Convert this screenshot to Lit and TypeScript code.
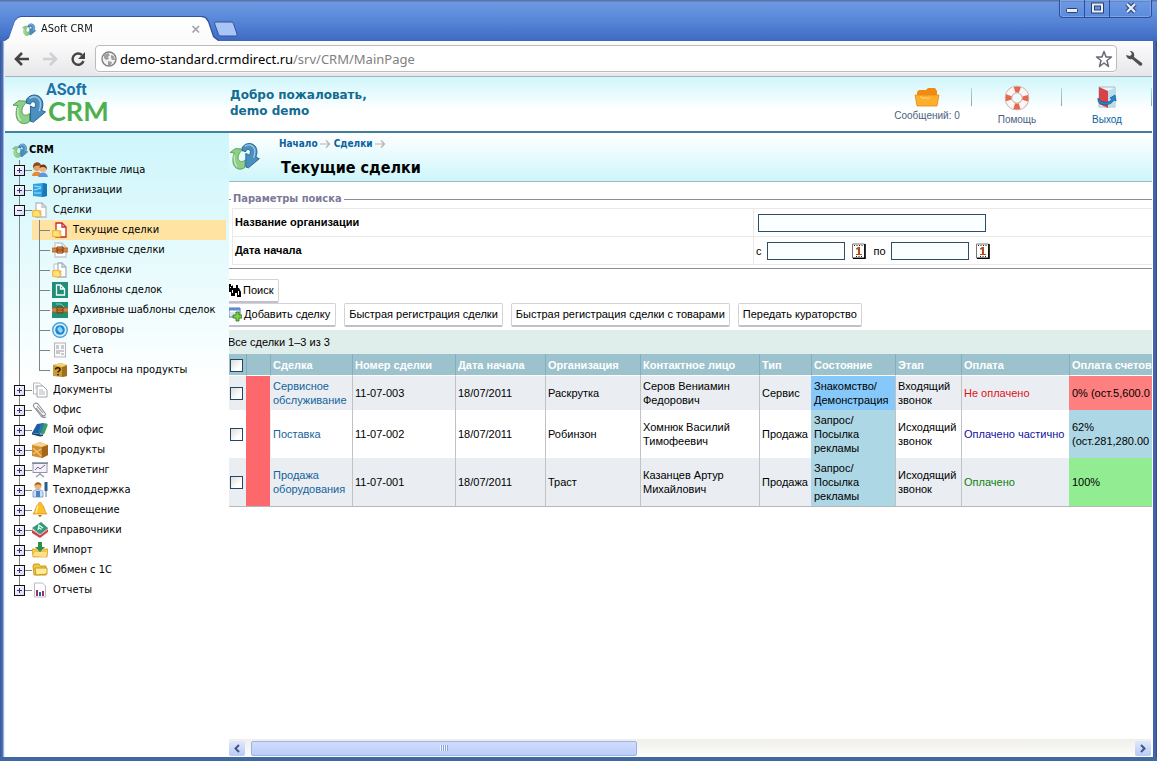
import { LitElement, html, css, svg, TemplateResult, SVGTemplateResult } from "lit";
import { customElement, state } from "lit/decorators.js";
import { classMap } from "lit/directives/class-map.js";

const arrows = svg`
  <path d="M1 12 L7 7.500 L15 8 L13.500 10.500 C11 13 9.500 17 10.500 20 C12 23 16 23 18 20.500 L18 29 C13 33 6 31 4.500 24 C3.800 20 4.500 15 6 12.500 Z" fill="#8fce86" stroke="#4f9f55" stroke-width="1"/>
  <path d="M6 15 C5.500 20 6 25 9 28" fill="none" stroke="#c6ebbb" stroke-width="1.500"/>
  <path d="M15 6 C19 0 28 0 31 7 C32.500 11 31.500 15 30.500 17.500 L34.500 19 L22 29.500 L19 28.500 L19 13 L23 15 C25 12 24.500 8.500 21.500 8.500 C20 8.500 19.500 9.500 19 11 L15 10 Z" fill="#4a8fbe" stroke="#1f5f92" stroke-width="1"/>
  <path d="M18 5 C22 2 27 3 29 8 C30 12 29 15 28 18" fill="none" stroke="#9cc9e6" stroke-width="1.500"/>`;

const page = (stroke: string, x = 4) => svg`
  <path d="M${x} 1h${10 - x}l4 4v10h-${14 - x}z" fill="#fff" stroke="${stroke}" stroke-width="1.300"/>
  <path d="M10 1v4h4" fill="none" stroke="${stroke}" stroke-width="1.300"/>`;

const hand = svg`<path d="M0 9l4-1 5 1v1H7l2 1v2l-1 2H4l-4-1z" fill="#ffd75e" stroke="#e0a92e" stroke-width=".8"/><path d="M2 11h5M2 13h5" stroke="#fff0a8" stroke-width=".8"/>`;
const belt = svg`<path d="M0 6h16v4H0z" fill="#d9813f"/><path d="M0 6h16M0 10h16" stroke="#a85a20" stroke-width=".8"/><path d="M5 5h6v6H5z" fill="none" stroke="#7b3d10" stroke-width="1"/><path d="M5 8h6" stroke="#7b3d10"/>`;

const ICONS: Record<string, SVGTemplateResult> = {
  people: svg`<circle cx="5" cy="5" r="4" fill="#e2a265"/><path d="M1 5c0-6 8-6 8-1C6 3 3 3 1 6z" fill="#8a4a1c"/><path d="M0 14c0-5 9-6 10 0z" fill="#e58a2e"/><circle cx="11" cy="6.500" r="3.600" fill="#edb27c"/><path d="M7.500 6c0-5 8-5 7.500 2-1-3-4-4-7.500-2z" fill="#6f3916"/><path d="M6 15c1-6 9-6 10 0z" fill="#5f95dc"/>`,
  cube: svg`<path d="M1 2l10-1 4 1v12l-5 1-9-1z" fill="#2f9fe0"/><path d="M11 1l4 1v12l-5 1z" fill="#1678b8"/><path d="M2 4l7 1M2 8l7-2M2 11l7 0" stroke="#a8e2fb" stroke-width="1.200"/>`,
  deal: svg`${page("#b9bcc2")}${hand}`,
  dealRed: svg`${page("#c9252c")}${hand}`,
  dealArch: svg`${page("#c6c9cd", 3)}${belt}`,
  dealAll: svg`<path d="M2 2h7v12H2z" fill="#fff" stroke="#b8bfcc"/>${page("#a8b2c4", 6)}${hand}`,
  template: svg`<rect width="16" height="16" fill="#1f8f76"/><path d="M4.500 3h4l4 4v6h-8z M8.500 3v4h4" fill="none" stroke="#fff" stroke-width="1.300"/>`,
  templateArch: svg`<rect width="16" height="16" fill="#1f8f76"/><path d="M4 2h5l3 3" fill="none" stroke="#7ad0b4"/>${belt}`,
  contract: svg`<circle cx="8" cy="8" r="7.300" fill="#d5efff" stroke="#4aa0d8" stroke-width="1.400"/><circle cx="8" cy="8" r="4.800" fill="#1f87d0"/><path d="M5 7l2.500-2.500 2 1.500 1.500 2.500-2 2.500-2-1z" fill="#8fd6fb"/>`,
  invoice: svg`<rect x="2.500" y="1" width="11" height="14" fill="#fafafa" stroke="#b4b4b8"/><path d="M4 4h3M9 4h3M4 6h3M9 6h3M4 9h8M4 11h4M9 12h3" stroke="#9a9aa2"/>`,
  question: svg`<path d="M1 3l8-2 6 2v11l-5 1-9-1z" fill="#c99a35"/><path d="M10 5l5-2v11l-5 1z" fill="#a1701a"/><path d="M1 3l8-2 6 2-5 2z" fill="#f3d374"/><path d="M3.500 7.500c0-2.500 4.500-2.500 4.500 0 0 1.500-2 1.500-2 3M6 12v1.500" fill="none" stroke="#2a1a05" stroke-width="1.500"/>`,
  docs: svg`<path d="M1.500 1h6l3 3v8h-9z" fill="#fff" stroke="#b3b7bd"/><path d="M5 4h6l4 4v7H5z" fill="#fff" stroke="#a0a5ac"/><path d="M7 8h4M7 10h6M7 12h6M3 4h3M3 6h1" stroke="#b3b7bd"/>`,
  clip: svg`<path d="M4 6l6 7c2 2 4 0 3-2L6 2C4-0 0 2 2 5l7 9c1 1 3 2 5 1M5 4l6 7" fill="none" stroke="#8e9095" stroke-width="1.100"/>`,
  notebook: svg`<path d="M5 2l7-1-4 11-8-1z" fill="#1b5f9e"/><path d="M9 1.500l6 0-4 10-5 0z" fill="#2a76b8"/><path d="M12 1.500l4 1-4 10-3-1z" fill="#39a060"/><path d="M0 11l9 1.500 2 0v1.500l-3 .5-8-2z" fill="#123f66"/>`,
  box: svg`<path d="M0 3l8-3 8 3v10l-6 3-10-2z" fill="#d08f35"/><path d="M0 3l8-3 8 3-6 2z" fill="#f6d48a"/><path d="M10 5l6-2v10l-6 3z" fill="#a5651a"/><path d="M1 6l8 8M9 7l-8 5" stroke="#f3c778" stroke-width="1.200"/>`,
  chart: svg`<rect x="1" y="1.500" width="14" height="9" fill="#f2f3f8" stroke="#9298a8"/><path d="M0 1h16" stroke="#7c8294" stroke-width="1.400"/><path d="M3 8l3-3 2 2 5-4" fill="none" stroke="#8b5a9a"/><path d="M8 10v2l-4 3M8 12l4 3" fill="none" stroke="#9298a8" stroke-width="1.300"/>`,
  support: svg`<circle cx="6" cy="4" r="3.400" fill="#efb37a"/><path d="M2.500 4c0-5 7-5 7 0-2-2-5-2-7 0z" fill="#a8601d"/><path d="M1 15V10c0-3 10-3 10 0v5z" fill="#cfe0f6" stroke="#6d93c9" stroke-width=".8"/><path d="M4 9v6h4V9" fill="#4d83c9"/><path d="M14 0v9" stroke="#2a5d8c" stroke-width="3"/><path d="M14 9v6" stroke="#8ba3bb" stroke-width="1.400"/>`,
  bell: svg`<path d="M8 0c1 0 1.500 1 1.500 2C13 4 12 9 15 12H1C4 9 3 4 6.500 2 6.500 1 7 0 8 0z" fill="#fbbf2d" stroke="#d08f12" stroke-width=".7"/><path d="M6 4c-1.500 2-1 5-2 7" stroke="#fff1a0" stroke-width="1.400" fill="none"/><path d="M6 13h4l-2 2.500z" fill="#b5720c"/>`,
  books: svg`<path d="M0 7v4l8 5 8-6V6l-8 6z" fill="#c8434a"/><path d="M0 6l9-6 7 6-8 6z" fill="#2f9b7a"/><path d="M0 7.500l8 5.500 8-6" fill="none" stroke="#f1e6e6" stroke-width=".8"/><path d="M6 8l1-5 4 3M6.500 5.500l3 2" fill="none" stroke="#e8fff4" stroke-width="1.200"/>`,
  importBox: svg`<path d="M0 7h4l1 2h6l1-2h4l-1 8H1z" fill="#f6c63e" stroke="#d29a1a" stroke-width=".7"/><path d="M1 14l2-4h12l-1 5z" fill="#ffe08a"/><path d="M6 0h4v5h3l-5 5-5-5h3z" fill="#2c8f45"/>`,
  folder: svg`<path d="M1 4l1-2h5l1 2h6v9l-12 0z" fill="#f3c93f" stroke="#c19415" stroke-width=".9"/><path d="M3 6h12l0 6-11 1z" fill="#ffeb9a" stroke="#c19415" stroke-width=".9"/>`,
  report: svg`<path d="M2.500 1h8l3 3v11h-11z" fill="#fff" stroke="#b9bcc2"/><path d="M5 8v6M11 9v5" stroke-width="2" stroke="#9b2f6c"/><path d="M8 10v4" stroke-width="2" stroke="#2d5b9f"/>`,
};

const icon = (name: string) => html`<svg class="ico" width="16" height="16" viewBox="0 0 16 16" aria-hidden="true">${ICONS[name]}</svg>`;
const logo = (w: number, h: number) => html`<svg class="ico" width="${w}" height="${h}" viewBox="0 0 35 32" aria-hidden="true">${arrows}</svg>`;

interface Node { label: string; icon: string; children?: Node[]; }

const TREE: Node[] = [
  { label: "Контактные лица", icon: "people" },
  { label: "Организации", icon: "cube" },
  {
    label: "Сделки", icon: "deal", children: [
      { label: "Текущие сделки", icon: "dealRed" },
      { label: "Архивные сделки", icon: "dealArch" },
      { label: "Все сделки", icon: "dealAll" },
      { label: "Шаблоны сделок", icon: "template" },
      { label: "Архивные шаблоны сделок", icon: "templateArch" },
      { label: "Договоры", icon: "contract" },
      { label: "Счета", icon: "invoice" },
      { label: "Запросы на продукты", icon: "question" },
    ],
  },
  { label: "Документы", icon: "docs" },
  { label: "Офис", icon: "clip" },
  { label: "Мой офис", icon: "notebook" },
  { label: "Продукты", icon: "box" },
  { label: "Маркетинг", icon: "chart" },
  { label: "Техподдержка", icon: "support" },
  { label: "Оповещение", icon: "bell" },
  { label: "Справочники", icon: "books" },
  { label: "Импорт", icon: "importBox" },
  { label: "Обмен с 1С", icon: "folder" },
  { label: "Отчеты", icon: "report" },
];

interface Deal {
  name: string; num: string; date: string; org: string; person: string; type: string;
  state: string[]; stateTone: string; stage: string; pay: string; payTone: string; bill: string[]; billTone: string;
}

const DEALS: Deal[] = [
  { name: "Сервисное обслуживание", num: "11-07-003", date: "18/07/2011", org: "Раскрутка", person: "Серов Вениамин Федорович", type: "Сервис", state: ["Знакомство/", "Демонстрация"], stateTone: "sky", stage: "Входящий звонок", pay: "Не оплачено", payTone: "unpaid", bill: ["0% (ост.5,600.0"], billTone: "red" },
  { name: "Поставка", num: "11-07-002", date: "18/07/2011", org: "Робинзон", person: "Хомнюк Василий Тимофеевич", type: "Продажа", state: ["Запрос/", "Посылка", "рекламы"], stateTone: "pale", stage: "Исходящий звонок", pay: "Оплачено частично", payTone: "partial", bill: ["62%", "(ост.281,280.00"], billTone: "pale" },
  { name: "Продажа оборудования", num: "11-07-001", date: "18/07/2011", org: "Траст", person: "Казанцев Артур Михайлович", type: "Продажа", state: ["Запрос/", "Посылка", "рекламы"], stateTone: "pale", stage: "Исходящий звонок", pay: "Оплачено", payTone: "paid", bill: ["100%"], billTone: "green" },
];

const COLUMNS = ["Сделка", "Номер сделки", "Дата начала", "Организация", "Контактное лицо", "Тип", "Состояние", "Этап", "Оплата", "Оплата счетов"];

const reset = css`
  :host, * { box-sizing: border-box; }
  button { font: inherit; color: inherit; margin: 0; padding: 0; border: 0; background: none; cursor: pointer; }
  input { font: inherit; margin: 0; }
  a { color: inherit; text-decoration: none; }
  ul { list-style: none; margin: 0; padding: 0; }
  svg { display: block; flex: none; }
`;

@customElement("browser-chrome")
export class BrowserChrome extends LitElement {
  static styles = [reset, css`
    :host { display: block; flex: none; font: 11px/14px "DejaVu Sans Condensed", "DejaVu Sans", sans-serif; }
    .titlebar { display: flex; align-items: flex-end; height: 41px; background: linear-gradient(#5a74a8 0, #5a74a8 1px, #6d98e2 2px, #5f8edd 14px, #4571c9 36px, #3d68bd); padding: 0 5px; }
    .tabs { display: flex; flex: 1; align-items: flex-end; }
    .tabwrap { filter: drop-shadow(0 -1px 0 #2f549e) drop-shadow(1px 0 0 #2f549e); }
    .tab { display: flex; align-items: center; width: 213px; height: 24px; padding: 0 12px 0 17px; background: linear-gradient(#fff, #fbfbfb); clip-path: polygon(0 24px, 4px 21px, 10px 4px, 13px 1px, 16px 0, 196px 0, 200px 1px, 203px 5px, 208px 20px, 213px 24px); }
    .tab span { flex: 1; padding-left: 5px; color: #111; }
    .tab button { color: #999; width: 10px; height: 14px; margin-right: 5px; }
    .newtab { width: 26px; height: 16px; margin: 0 0 4px -6px; }
    .wbtns { display: flex; align-self: flex-start; height: 18px; border: 1px solid #2c4f9a; border-top: 0; border-radius: 0 0 4px 4px; box-shadow: inset 0 0 0 1px #7fa3e6; }
    .wbtns button { width: 25px; display: flex; align-items: center; justify-content: center; border-right: 1px solid #2c4f9a; }
    .wbtns button:last-child { width: 41px; border-right: 0; }
    .toolbar { display: flex; align-items: center; height: 36px; padding: 0 9px; margin: 0 5px; background: linear-gradient(#fcfcfd, #e6e7e8); border-bottom: 1px solid #a9b3b8; }
    .nav { display: flex; gap: 12px; width: 81px; }
    .omni { flex: 1; display: flex; align-items: center; height: 27px; padding: 0 3px 0 5px; background: #fff; border: 1px solid #bcbcc0; border-radius: 4px; box-shadow: 0 1px 0 #f6f6f6; }
    .url { flex: 1; padding-left: 3px; font: 13px/20px "Noto Sans", sans-serif; color: #808080; white-space: nowrap; }
    .url b { font-weight: normal; color: #000; }
    .wrench { margin-left: 8px; }
  `];

  render() {
    return html`
      <div class="titlebar">
        <div class="tabs">
          <div class="tabwrap"><div class="tab">${logo(14, 13)}<span>ASoft CRM</span>
            <button aria-label="Закрыть вкладку"><svg width="10" height="14" viewBox="0 0 10 14"><path d="M1.500 4l6.500 6.500M8 4L1.500 10.500" stroke="#a0a0a4" stroke-width="1.600"/></svg></button>
          </div></div>
          <button class="newtab" aria-label="Новая вкладка"><svg width="26" height="16" viewBox="0 0 26 16"><path d="M4 1h15c2 0 2 1 3 3l3 9c0 2 0 2-2 2H9C7 15 7 14 6 12L3 4C2.500 2 2 1 4 1z" fill="#a9c5f5" stroke="#2f549e"/></svg></button>
        </div>
        <div class="wbtns">
          <button aria-label="Свернуть"><svg width="14" height="14" viewBox="0 0 14 14"><rect x="1.500" y="6.500" width="11" height="4" rx="1" fill="#e6eefc" stroke="#2b3f70"/></svg></button>
          <button aria-label="Развернуть"><svg width="14" height="14" viewBox="0 0 14 14"><rect x="3" y="2.500" width="9" height="7" fill="none" stroke="#2b3f70" stroke-width="4"/><rect x="3" y="2.500" width="9" height="7" fill="none" stroke="#e6eefc" stroke-width="2"/></svg></button>
          <button aria-label="Закрыть"><svg width="14" height="14" viewBox="0 0 14 14"><path d="M3 2l8 8M11 2l-8 8" stroke="#2b3f70" stroke-width="4.500"/><path d="M3 2l8 8M11 2l-8 8" stroke="#e6eefc" stroke-width="2.400"/></svg></button>
        </div>
      </div>
      <div class="toolbar">
        <div class="nav">
          <button aria-label="Назад"><svg width="16" height="16" viewBox="0 0 16 16"><path d="M15 8H3M8 2L2 8l6 6" fill="none" stroke="#444" stroke-width="2.600"/></svg></button>
          <button aria-label="Вперёд"><svg width="16" height="16" viewBox="0 0 16 16"><path d="M1 8h12M8 2l6 6-6 6" fill="none" stroke="#d0d0d2" stroke-width="2.600"/></svg></button>
          <button aria-label="Обновить"><svg width="16" height="16" viewBox="0 0 16 16"><path d="M12 4A5.600 5.600 0 1 0 13.500 10" fill="none" stroke="#444" stroke-width="2.400"/><path d="M15 1v7H8z" fill="#444"/></svg></button>
        </div>
        <div class="omni">
          <svg width="16" height="16" viewBox="0 0 16 16" aria-hidden="true"><circle cx="8" cy="8" r="7" fill="#f2f2f2" stroke="#808084" stroke-width="1.400"/><path d="M3 4l4-2 2 2-2 2 1 2-3 1-2-2zM10 4l3 1 1 4-3 0-1-2zM7 10l4 1-1 3-3 0z" fill="#a0a0a4"/></svg>
          <div class="url"><b>demo-standard.crmdirect.ru</b>/srv/CRM/MainPage</div>
          <button aria-label="В закладки"><svg width="18" height="18" viewBox="0 0 18 18"><path d="M9 1.500l2 5.500h5.500l-4.500 3.500 1.500 6L9 13l-4.500 3.500L6 10.500 1.500 7H7z" fill="#fff" stroke="#666a78" stroke-width="1.500" stroke-linejoin="round"/></svg></button>
        </div>
        <button class="wrench" aria-label="Настройки"><svg width="18" height="17" viewBox="0 0 18 17"><path d="M1 5c1 4 4 5 6 4l7 6c2 2 4 0 3-2L9 7c1-4-1-6-4-6l2 3-2 2z" fill="#505054"/></svg></button>
      </div>`;
  }
}

@customElement("crm-header")
export class CrmHeader extends LitElement {
  static styles = [reset, css`
    :host { display: flex; flex: none; height: 56px; background: linear-gradient(#cff6fb, #fff 60%); border-bottom: 2px solid #41809f; }
    .brand { display: flex; width: 224px; padding: 4px 0 0 7px; }
    .brand .ico { margin-top: 12px; }
    .words { display: flex; flex-direction: column; }
    .asoft { font: bold 16px/18px Roboto, "Liberation Sans", sans-serif; color: #1d72a8; }
    .crm { font: bold 27px/24px Lato, sans-serif; color: #4cb050; padding-left: 2px; }
    .hello { flex: 1; margin: 0; padding: 10px 0 0 1px; font: bold 12px/16px "DejaVu Sans", sans-serif; color: #126c90; }
    nav { display: flex; }
    nav a { display: flex; flex-direction: column; align-items: center; gap: 3px; width: 90px; padding-top: 8px; font: 10px/12px "Liberation Sans", sans-serif; color: #47627f; white-space: nowrap; }
    nav a.exit { color: #0a62a0; }
    .sep { width: 1px; height: 18px; margin: 11px 0 0 -1px; background: linear-gradient(#9fdfe6, #8aa7ad); }
  `];

  render() {
    return html`
      <div class="brand">${logo(34, 32)}<div class="words"><span class="asoft">ASoft</span><span class="crm">CRM</span></div></div>
      <p class="hello">Добро пожаловать,<br>demo demo</p>
      <nav>
        <a href="#"><svg width="26" height="22" viewBox="0 1 26 22"><path d="M3 11V8l2-2h7l2-2h7l2 3v5z" fill="#f08a12"/><path d="M1 11h24l-2 11H3z" fill="#fcae2c" stroke="#e68a12" stroke-width=".8"/><path d="M6 12l2 2h8" stroke="#ffd98a" fill="none"/></svg>Сообщений: 0</a>
        <i class="sep"></i>
        <a href="#"><svg width="26" height="26" viewBox="0 0 26 26"><circle cx="13" cy="13" r="8.500" fill="none" stroke="#c9a8a4" stroke-width="7.500"/><circle cx="13" cy="13" r="8.500" fill="none" stroke="#fdf6f5" stroke-width="6"/><circle cx="13" cy="13" r="8.500" fill="none" stroke="#e2694f" stroke-width="6" stroke-dasharray="5.400 7.952" stroke-dashoffset="2.700"/></svg>Помощь</a>
        <i class="sep"></i>
        <a href="#" class="exit"><svg width="26" height="26" viewBox="0 0 26 26"><path d="M5 2h16v20H5z" fill="#eef5f8" stroke="#a7bcc4"/><path d="M5 2l9 4v17l-9-4z" fill="#d8434a"/><path d="M14 6l6-3v18l-6 2z" fill="#b9e0ea"/><path d="M4 13c2 5 11 6 14 1l-2-1 5-3 1 6-2-1c-4 7-16 6-16 0z" fill="#2386cc" stroke="#0f5b9a" stroke-width=".7"/></svg>Выход</a>
        <i class="sep"></i>
      </nav>`;
  }
}

@customElement("crm-tree")
export class CrmTree extends LitElement {
  @state() private open = new Set<string>(["Сделки"]);

  static styles = [reset, css`
    :host { display: block; flex: none; width: 224px; padding: 7px 3px 0 0; font: 11px/20px "DejaVu Sans Condensed", "DejaVu Sans", sans-serif; color: #000; background: linear-gradient(to bottom, #cdf6fb, rgba(255,255,255,0) 250px), #fff; }
    .root { display: flex; align-items: center; gap: 1px; height: 20px; padding-left: 7px; font-weight: bold; }
    .row { display: flex; align-items: center; height: 20px; }
    .row a { flex: 1; display: flex; align-items: center; gap: 5px; height: 20px; white-space: nowrap; }
    .top > li { background: linear-gradient(#7d8488, #7d8488) 14px 0 / 1px 100% no-repeat; }
    .top > li:last-child { background-size: 1px 10px; }
    .top > li > .row { padding-left: 9px; }
    .box { width: 11px; height: 11px; flex: none; border: 1px solid #111; background: linear-gradient(135deg, #fff, #d8d6ec); }
    .dash { width: 7px; height: 1px; flex: none; background: #7d8488; }
    .sub { padding-left: 27px; }
    .sub li { background: linear-gradient(#7d8488, #7d8488) 7px 0 / 1px 100% no-repeat; }
    .sub li:last-child { background-size: 1px 10px; }
    .sub .row { padding-left: 7px; }
    .sub .dash { width: 11px; margin-right: 2px; }
    .sub li.sel { background: linear-gradient(#7d8488, #7d8488) 7px 0 / 1px 100% no-repeat, #ffe3a3; }
  `];

  private toggle(label: string) {
    const next = new Set(this.open);
    next.has(label) ? next.delete(label) : next.add(label);
    this.open = next;
  }

  private item(n: Node): TemplateResult {
    const isOpen = this.open.has(n.label) && !!n.children;
    return html`<li>
      <div class="row">
        <button class="box" aria-label="${n.label}" aria-expanded="${isOpen}" @click=${() => this.toggle(n.label)}>
          <svg width="9" height="9" viewBox="0 0 9 9"><path d="${isOpen ? "M2 4.500h5" : "M2 4.500h5M4.500 2v5"}" stroke="#2a2a90"/></svg>
        </button><i class="dash"></i><a href="#">${icon(n.icon)}<span>${n.label}</span></a>
      </div>
      ${isOpen ? html`<ul class="sub">${n.children!.map((c, i) => html`<li class=${classMap({ sel: i === 0 })}><div class="row"><i class="dash"></i><a href="#">${icon(c.icon)}<span>${c.label}</span></a></div></li>`)}</ul>` : null}
    </li>`;
  }

  render() {
    return html`<nav aria-label="CRM"><a class="root" href="#">${logo(16, 15)}<span>CRM</span></a><ul class="top">${TREE.map(n => this.item(n))}</ul></nav>`;
  }
}

@customElement("crm-deals")
export class CrmDeals extends LitElement {
  static styles = [reset, css`
    :host { display: flex; flex-direction: column; flex: 1; min-width: 0; overflow: hidden; background: #fff; font: 11px/14px "Liberation Sans", Arial, sans-serif; color: #000; }
    .head { display: flex; flex: none; height: 49px; background: linear-gradient(#fff, #cdf6fb); border-bottom: 1px solid #a5b9c0; }
    .head > .ico { margin-top: 9px; }
    .titles { padding: 3px 0 0 19px; }
    .crumbs { display: flex; align-items: center; height: 15px; font: bold 10px/15px "DejaVu Sans Condensed", "DejaVu Sans", sans-serif; color: #0a62a0; }
    .crumbs svg { margin: 0 3px 0 2px; }
    h1 { margin: 7px 0 0 2px; font: bold 16px/20px "DejaVu Sans Condensed", "DejaVu Sans", sans-serif; }
    .frame { display: flex; flex-direction: column; flex: none; margin-top: 10px; padding-bottom: 3px; border-bottom: 1px solid #8c8c96; }
    .legend { display: flex; align-items: center; gap: 2px; height: 14px; margin: 0; font: bold 11px/14px "DejaVu Sans Condensed", "DejaVu Sans", sans-serif; color: #7c7a98; }
    .legend::before { content: ""; width: 2px; height: 1px; background: #8c8c96; }
    .legend::after { content: ""; flex: 1; height: 1px; background: #8c8c96; }
    .params { margin: 2px 0 0 3px; border: 1px solid #e9e9e9; border-right: 0; }
    .param { display: grid; grid-template-columns: 520px 1fr; height: 27px; font-weight: bold; }
    .param + .param { height: 28px; border-top: 1px solid #e9e9e9; }
    .param > label, .param > span { padding-left: 2px; line-height: 26px; }
    .fields { display: flex; align-items: center; padding-left: 4px; border-left: 1px solid #e9e9e9; font-weight: normal; }
    .dates { padding-left: 2px; }
    .fields input { height: 18px; border: 1px solid #2f4e66; background: #fbffff; border-radius: 0; padding: 0 2px; outline: none; }
    .wide { width: 228px; }
    .short { width: 78px; margin: 0 7px 0 5px; }
    .cal { margin-right: 8px; }
    .btn { height: 24px; padding: 0 4px 1px; border: 1px solid #d2d2d8; border-bottom: 2px solid #c0c0cc; border-radius: 2px; background: #fff; white-space: nowrap; display: flex; align-items: center; }
    .btn.cut { border-left: 0; padding: 0 5px 1px 0; gap: 2px; border-radius: 0 2px 2px 0; }
    .search { display: flex; padding-top: 10px; }
    .actions { display: flex; gap: 8px; }
    .count { height: 24px; margin-top: 3px; line-height: 25px; background: #dfeeeb; }
    .count span { margin-left: -1px; }
    table { width: 100%; table-layout: fixed; border-collapse: separate; border-spacing: 0; border-bottom: 1px solid #b5b9bb; }
    th { height: 22px; padding: 1px 2px 0; background: #9cc2cd; color: #fff; text-align: left; border-left: 1px solid #86adb9; border-bottom: 1px solid #fff; white-space: nowrap; }
    td { padding: 3px 0 3px 2px; border-left: 1px solid #bfc3c6; vertical-align: middle; }
    tr:nth-child(odd) td { background: #eaeef2; }
    th:first-child, td:first-child { border-left: 0; padding-left: 1px; }
    tr td.mark { background: #fd686c; border-left-color: #fd686c; }
    td.mark + td { border-left-color: #eaeef2; }
    td a { color: #14639a; }
    tr td.sky { background: #87c8fb; }
    tr td.pale { background: #aed7e6; }
    tr td.red { background: #fd7f7f; }
    tr td.green { background: #92ec92; }
    td.sky, td.pale, td.red, td.green { border-left-color: transparent; }
    .line { display: block; white-space: nowrap; }
    .one { white-space: nowrap; }
    .unpaid { color: #e01020; } .partial { color: #1010a0; } .paid { color: #108010; }
    input[type="checkbox"] { appearance: none; display: block; width: 13px; height: 13px; border: 1px solid #23456a; background: linear-gradient(135deg, #dcdcd8, #fff 70%); }
    .c-check { width: 17px; } .c-mark { width: 24px; } .c-name { width: 82px; } .c-num { width: 103px; } .c-date { width: 90px; }
    .c-org { width: 95px; } .c-person { width: 119px; } .c-type { width: 52px; } .c-state { width: 84px; } .c-stage { width: 66px; } .c-pay { width: 108px; }
    .grow { flex: 1; }
    .scroll { display: flex; flex: none; align-items: center; height: 18px; margin-right: 1px; background: linear-gradient(#efeeea, #fdfdfb); }
    .scroll button { width: 16px; height: 15px; display: flex; align-items: center; justify-content: center; border-radius: 2px; background: linear-gradient(#dfe8ff, #b9c9f5); }
    .track { flex: 1; display: flex; padding: 0 6px; }
    .thumb { flex: 0 0 44%; display: flex; align-items: center; justify-content: center; height: 15px; border: 1px solid #9db3e6; border-radius: 2px; background: linear-gradient(#cfdcfd, #bccdf9); }
  `];

  private cal() {
    return html`<button class="cal" aria-label="Календарь"><svg width="14" height="16" viewBox="0 0 14 16"><path d="M.5 1h12v14H.5z" fill="#fff" stroke="#777"/><path d="M13 1v14.500H1" fill="none" stroke="#000" stroke-width="1.600"/><path d="M2 2.500h9M4 13.500h6" stroke="#222" stroke-dasharray="1 1.500"/><path d="M6 4h2v7h2v1H4v-1h2V6.500H4V5.500z" fill="#b84a1c"/></svg></button>`;
  }

  private arrow() {
    return html`<svg width="11" height="9" viewBox="0 0 11 9"><path d="M0 5h9M6 1.500L9.500 5 6 8.500" fill="none" stroke="#b3b3b3" stroke-width="1.200"/></svg>`;
  }

  render() {
    return html`
      <header class="head">${logo(31, 28)}
        <div class="titles"><div class="crumbs"><a href="#">Начало</a>${this.arrow()}<a href="#">Сделки</a>${this.arrow()}</div><h1>Текущие сделки</h1></div>
      </header>
      <section class="frame" aria-labelledby="params">
        <h2 class="legend" id="params">Параметры поиска</h2>
        <div class="params">
          <div class="param"><label for="org">Название организации</label><div class="fields"><input class="wide" id="org" type="text"></div></div>
          <div class="param"><span>Дата начала</span><div class="fields dates"><label for="from">с</label><input class="short" id="from" type="text">${this.cal()}<label for="to">по</label><input class="short" id="to" type="text">${this.cal()}</div></div>
        </div>
      </section>
      <div class="search"><button class="btn cut"><svg width="12" height="16" viewBox="0 0 12 16"><path d="M0 4V2h2v2h1l1-1v3h3V3h2v3h1l2 4v5H8v-4H6v3H2v-4H0z" fill="#000"/><path d="M3 8h1v3H3zM9 9h1v4H9zM1 5h1v1H1z" fill="#fff"/></svg>Поиск</button></div>
      <div class="actions">
        <button class="btn cut"><svg width="13" height="16" viewBox="0 0 13 16"><path d="M0 2h11v9H0z" fill="#fff" stroke="#4a6fb5"/><path d="M0 2h11v2.500H0z" fill="#5d8ad0"/><path d="M0 7h8M0 9h6" stroke="#b9c8e0"/><path d="M7 6h3v3h3v3h-3v3H7v-3H4V9h3z" fill="#7fd048" stroke="#2c7d1a" stroke-width=".9"/></svg>Добавить сделку</button>
        <button class="btn">Быстрая регистрация сделки</button>
        <button class="btn">Быстрая регистрация сделки с товарами</button>
        <button class="btn">Передать кураторство</button>
      </div>
      <div class="count"><span>Все сделки 1–3 из 3</span></div>
      <table>
        <colgroup>${["check", "mark", "name", "num", "date", "org", "person", "type", "state", "stage", "pay", "bill"].map(c => html`<col class="c-${c}">`)}</colgroup>
        <thead><tr><th><input type="checkbox" aria-label="Выбрать все"></th><th></th>${COLUMNS.map(c => html`<th scope="col">${c}</th>`)}</tr></thead>
        <tbody>${DEALS.map(d => html`<tr>
          <td><input type="checkbox" aria-label="${d.name}"></td><td class="mark"></td>
          <td><a href="#">${d.name}</a></td><td>${d.num}</td><td>${d.date}</td><td>${d.org}</td><td>${d.person}</td><td class="one">${d.type}</td>
          <td class="${d.stateTone}">${d.state.map(s => html`<span class="line">${s}</span>`)}</td>
          <td>${d.stage}</td><td class="one ${d.payTone}">${d.pay}</td>
          <td class="${d.billTone}">${d.bill.map(s => html`<span class="line">${s}</span>`)}</td>
        </tr>`)}</tbody>
      </table>
      <div class="grow"></div>
      <div class="scroll">
        <button aria-label="Влево"><svg width="8" height="9" viewBox="0 0 8 9"><path d="M6 1L2.500 4.500 6 8" fill="none" stroke="#43567f" stroke-width="2"/></svg></button>
        <div class="track"><div class="thumb"><svg width="8" height="6" viewBox="0 0 8 6"><path d="M.5 0v6M2.500 0v6M4.500 0v6M6.500 0v6" stroke="#eef4fe"/><path d="M1.500 0v6M3.500 0v6M5.500 0v6M7.500 0v6" stroke="#8ca4dc"/></svg></div></div>
        <button aria-label="Вправо"><svg width="8" height="9" viewBox="0 0 8 9"><path d="M2 1l3.500 3.500L2 8" fill="none" stroke="#43567f" stroke-width="2"/></svg></button>
      </div>`;
  }
}

@customElement("app-root")
export class AppRoot extends LitElement {
  static styles = css`
    :host { display: flex; flex-direction: column; height: 100vh; box-sizing: border-box; overflow: hidden; background: linear-gradient(90deg, #3a5793 0, #4f74bd 3px, #e4f0ff 4px, #e4f0ff 5px, #fff 5px, #fff calc(100% - 4px), #3a5ba6 calc(100% - 4px), #4a6cb3 calc(100% - 2px), #2c4379); border-bottom: 4px solid #41689f; }
    .page { flex: 1; min-height: 0; display: flex; flex-direction: column; margin: 0 5px; }
    .body { flex: 1; min-height: 0; display: flex; }
  `;

  render() {
    return html`<browser-chrome></browser-chrome>
      <div class="page"><crm-header></crm-header><div class="body"><crm-tree></crm-tree><crm-deals></crm-deals></div></div>`;
  }
}
